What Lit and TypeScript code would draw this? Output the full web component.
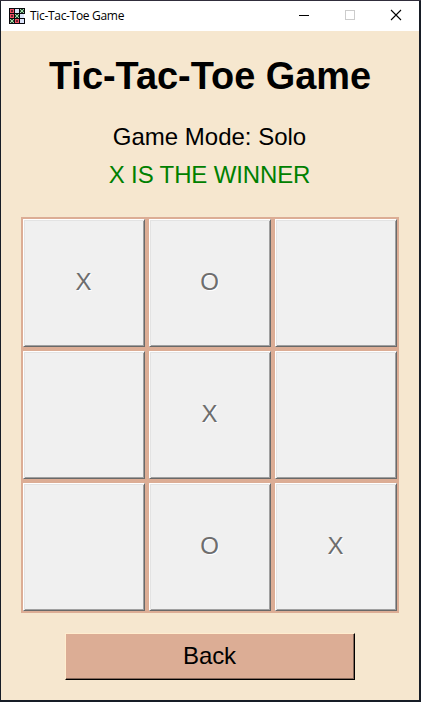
import { LitElement, html, css, svg } from "lit";
import { customElement, state } from "lit/decorators.js";

@customElement("app-root")
export class AppRoot extends LitElement {
  @state() private cells = ["X", "O", "", "", "X", "", "", "O", "X"];

  static styles = css`
    :host { display: block; width: 421px; height: 702px; box-sizing: border-box;
      background: #171d26; border-top: 1px solid #302d3b; padding: 0 2px 2px 1px;
      font-family: "Liberation Sans", Arial, sans-serif; color: #000; overflow: hidden; }
    .window { width: 418px; height: 699px; background: #f6e7cf; display: flex; flex-direction: column; align-items: center; }
    .bar { width: 100%; height: 30px; background: #fff; display: flex; align-items: center; flex: none; }
    .logo { margin: 0 0 0 8px; display: block; }
    .name { font: 12px/16px "Open Sans", "Noto Sans", sans-serif; letter-spacing: -0.31px; margin-left: 5px; flex: 1; white-space: nowrap; }
    .control { width: 46px; height: 30px; display: block; flex: none; }
    h1 { font-size: 37.9px; line-height: 44px; margin: 23px 0 0; font-weight: bold; white-space: nowrap; }
    .line { font-size: 24px; line-height: 28px; margin-top: 25px; white-space: nowrap; padding-right: 1px; }
    .win { color: #008000; margin-top: 10px; letter-spacing: -0.13px; }
    .board { box-sizing: border-box; width: 378px; height: 396px; margin-top: 28px; padding: 2px;
      background: #dcad95; display: grid; grid-template: repeat(3, 128px) / repeat(3, 122px); gap: 4px; flex: none; }
    button { font: inherit; font-size: 24px; box-sizing: border-box; padding: 0; border-radius: 0; margin: 0; }
    .cell { background: #f0f0f0; border: 1px solid; border-color: #fff #696969 #696969 #fff; padding: 0 1px 2px 0;
      box-shadow: inset 1px 1px #e3e3e3, inset -1px -1px #a0a0a0; color: #6d6d6d; text-shadow: 1px 1px #fff; }
    .back { width: 290px; height: 47px; margin-top: 20px; background: #dcad95; color: #000; padding: 0 1px 2px 0; letter-spacing: -0.1px;
      border: 1px solid; border-color: #ffedcf #000 #000 #ffedcf; box-shadow: inset -1px -1px #84685a; }
  `;

  private logo() {
    const tiles = ["r", "b", "g", "r", "g", "b", "g", "r", "b"];
    return svg`<svg class="logo" width="16" height="16" shape-rendering="crispEdges">
      <rect width="16" height="16" fill="#08080d"/>
      ${tiles.map((t, i) => {
        const x = 1 + (i % 3) * 5, y = 1 + Math.floor(i / 3) * 5;
        const fill = t === "r" ? "#ef5063" : t === "g" ? "#a1dca8" : "#dce4fa";
        return svg`<rect x=${x} y=${y} width="4" height="4" fill=${fill}/>
          ${t === "r" ? svg`<rect x=${x + 1} y=${y + 1} width="2" height="2" fill="#6b2430"/>` : ""}
          ${t === "g" ? svg`<path d=${`M${x + 1} ${y}h2v1h-2zM${x} ${y + 1}h1v2h-1zM${x + 3} ${y + 1}h1v2h-1zM${x + 1} ${y + 3}h2v1h-2z`} fill="#2b4a35"/>` : ""}`;
      })}
      <path d="M15 6h1v4h-1z" fill="#fff"/>
    </svg>`;
  }

  render() {
    return html`<div class="window">
      <div class="bar">
        ${this.logo()}
        <div class="name">Tic-Tac-Toe Game</div>
        <svg class="control" viewBox="0 0 46 30"><path d="M18 14.5h10" stroke="#000"/></svg>
        <svg class="control" viewBox="0 0 46 30"><rect x="18.5" y="9.5" width="9" height="9" fill="none" stroke="#ccc"/></svg>
        <svg class="control" viewBox="0 0 46 30"><path d="M18 9l10 10M28 9l-10 10" stroke="#000" stroke-width="1.1"/></svg>
      </div>
      <h1>Tic-Tac-Toe Game</h1>
      <div class="line">Game Mode: Solo</div>
      <div class="line win">X IS THE WINNER</div>
      <div class="board">${this.cells.map((c) => html`<button class="cell" disabled>${c}</button>`)}</div>
      <button class="back">Back</button>
    </div>`;
  }
}
